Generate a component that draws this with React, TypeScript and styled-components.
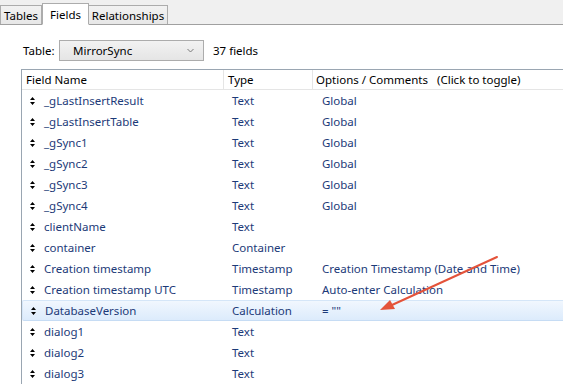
import React from 'react';
import styled, { createGlobalStyle } from 'styled-components';

const GlobalStyle = createGlobalStyle`
  html, body {
    margin: 0;
    padding: 0;
    background: #ffffff;
  }
  body {
    font-family: 'Noto Sans', 'Liberation Sans', sans-serif;
    font-size: 11.5px;
  }
`;

const Window = styled.div`
  position: relative;
  width: 563px;
  height: 387px;
  overflow: hidden;
  background: #ffffff;
  color: #000000;
`;

const TabBar = styled.div`
  display: flex;
  align-items: flex-end;
  height: 24px;
  padding-left: 1px;
  background: #f0f0f0;
  border-bottom: 1px solid #a0a0a0;
`;

const Tab = styled.div<{ $active?: boolean; $width: number }>`
  display: flex;
  align-items: center;
  justify-content: center;
  box-sizing: border-box;
  width: ${(p) => p.$width}px;
  height: ${(p) => (p.$active ? '22px' : '19px')};
  margin-bottom: ${(p) => (p.$active ? '-1px' : '0')};
  margin-left: ${(p) => (p.$active ? '0' : '-1px')};
  border: 1px solid #acacac;
  border-bottom: ${(p) => (p.$active ? '1px solid #ffffff' : 'none')};
  background: ${(p) =>
    p.$active ? '#ffffff' : 'linear-gradient(#f2f2f2, #e7e7e7)'};
  position: relative;
  z-index: ${(p) => (p.$active ? 1 : 0)};
  color: #000000;
`;

const TableBar = styled.div`
  display: flex;
  align-items: center;
  height: 21px;
  margin-top: 15px;
  padding-left: 23px;
`;

const Label = styled.span`
  width: 36px;
`;

const Select = styled.div`
  display: flex;
  align-items: center;
  justify-content: space-between;
  box-sizing: border-box;
  width: 145px;
  height: 21px;
  padding: 0 9px 0 13px;
  border: 1px solid #acacac;
  background: linear-gradient(#f2f2f2, #e5e5e5);
`;

const Count = styled.span`
  margin-left: 9px;
`;

const ListBox = styled.div`
  margin: 8px 0 0 21px;
  border-top: 1px solid #9aa6b2;
  border-left: 1px solid #9aa6b2;
`;

const Grid = styled.div`
  display: grid;
  grid-template-columns: 202px 89px 1fr;
`;

const HeaderCell = styled.div<{ $pad: number; $last?: boolean }>`
  display: flex;
  align-items: center;
  box-sizing: border-box;
  height: 20px;
  padding-left: ${(p) => p.$pad}px;
  border-bottom: 1px solid #e5e5e5;
  border-right: ${(p) => (p.$last ? 'none' : '1px solid #e5e5e5')};
  color: #000000;
`;

const Row = styled.div<{ $selected?: boolean }>`
  display: contents;
  & > div {
    height: 21px;
    box-sizing: border-box;
    ${(p) =>
      p.$selected
        ? `background: linear-gradient(#f1f7fe, #dcebfc);
           border-top: 1px solid #d5e6f8;
           border-bottom: 1px solid #c6dcf4;`
        : ''}
  }
  & > div:first-child {
    ${(p) =>
      p.$selected
        ? 'border-left: 1px solid #d5e6f8; border-radius: 2px 0 0 2px;'
        : ''}
  }
`;

const Cell = styled.div<{ $pad: number }>`
  display: flex;
  align-items: center;
  padding-left: ${(p) => p.$pad}px;
  color: #1c3a78;
  white-space: nowrap;
`;

const Handle = styled.svg`
  width: 5px;
  height: 8px;
  margin-right: 9px;
  flex: none;
`;

const Overlay = styled.svg`
  position: absolute;
  left: 0;
  top: 0;
  pointer-events: none;
`;

type Field = { name: string; type: string; options: string };

const fields: Field[] = [
  { name: '_gLastInsertResult', type: 'Text', options: 'Global' },
  { name: '_gLastInsertTable', type: 'Text', options: 'Global' },
  { name: '_gSync1', type: 'Text', options: 'Global' },
  { name: '_gSync2', type: 'Text', options: 'Global' },
  { name: '_gSync3', type: 'Text', options: 'Global' },
  { name: '_gSync4', type: 'Text', options: 'Global' },
  { name: 'clientName', type: 'Text', options: '' },
  { name: 'container', type: 'Container', options: '' },
  {
    name: 'Creation timestamp',
    type: 'Timestamp',
    options: 'Creation Timestamp (Date and Time)'
  },
  {
    name: 'Creation timestamp UTC',
    type: 'Timestamp',
    options: 'Auto-enter Calculation'
  },
  { name: 'DatabaseVersion', type: 'Calculation', options: '= ""' },
  { name: 'dialog1', type: 'Text', options: '' },
  { name: 'dialog2', type: 'Text', options: '' },
  { name: 'dialog3', type: 'Text', options: '' }
];

const MoveHandle = () => (
  <Handle viewBox='0 0 5 8'>
    <path d='M2.5 0 L5 3 L0 3 Z M0 5 L5 5 L2.5 8 Z' fill='#000000' />
  </Handle>
);

const App = () => {
  return (
    <Window>
      <GlobalStyle />
      <TabBar>
        <Tab $width={42}>Tables</Tab>
        <Tab $active $width={47}>
          Fields
        </Tab>
        <Tab $width={80}>Relationships</Tab>
      </TabBar>
      <TableBar>
        <Label>Table:</Label>
        <Select>
          <span>MirrorSync</span>
          <svg width='7' height='5' viewBox='0 0 7 5'>
            <path d='M0.5 1 L3.5 4 L6.5 1' stroke='#7a7a7a' fill='none' />
          </svg>
        </Select>
        <Count>37 fields</Count>
      </TableBar>
      <ListBox>
        <Grid>
          <HeaderCell $pad={4}>Field Name</HeaderCell>
          <HeaderCell $pad={4}>Type</HeaderCell>
          <HeaderCell $pad={3} $last>
            Options / Comments&nbsp;&nbsp;&nbsp;(Click to toggle)
          </HeaderCell>
          {fields.map((f) => (
            <Row key={f.name} $selected={f.name === 'DatabaseVersion'}>
              <Cell $pad={8}>
                <MoveHandle />
                {f.name}
              </Cell>
              <Cell $pad={8}>{f.type}</Cell>
              <Cell $pad={9}>{f.options}</Cell>
            </Row>
          ))}
        </Grid>
      </ListBox>
      <Overlay width='563' height='387'>
        <line
          x1='497'
          y1='257'
          x2='392'
          y2='305'
          stroke='#e4533a'
          strokeWidth='2'
          strokeLinecap='round'
        />
        <path d='M380 310 L390 300 L395 309 Z' fill='#e4533a' />
      </Overlay>
    </Window>
  );
};

export default App;
